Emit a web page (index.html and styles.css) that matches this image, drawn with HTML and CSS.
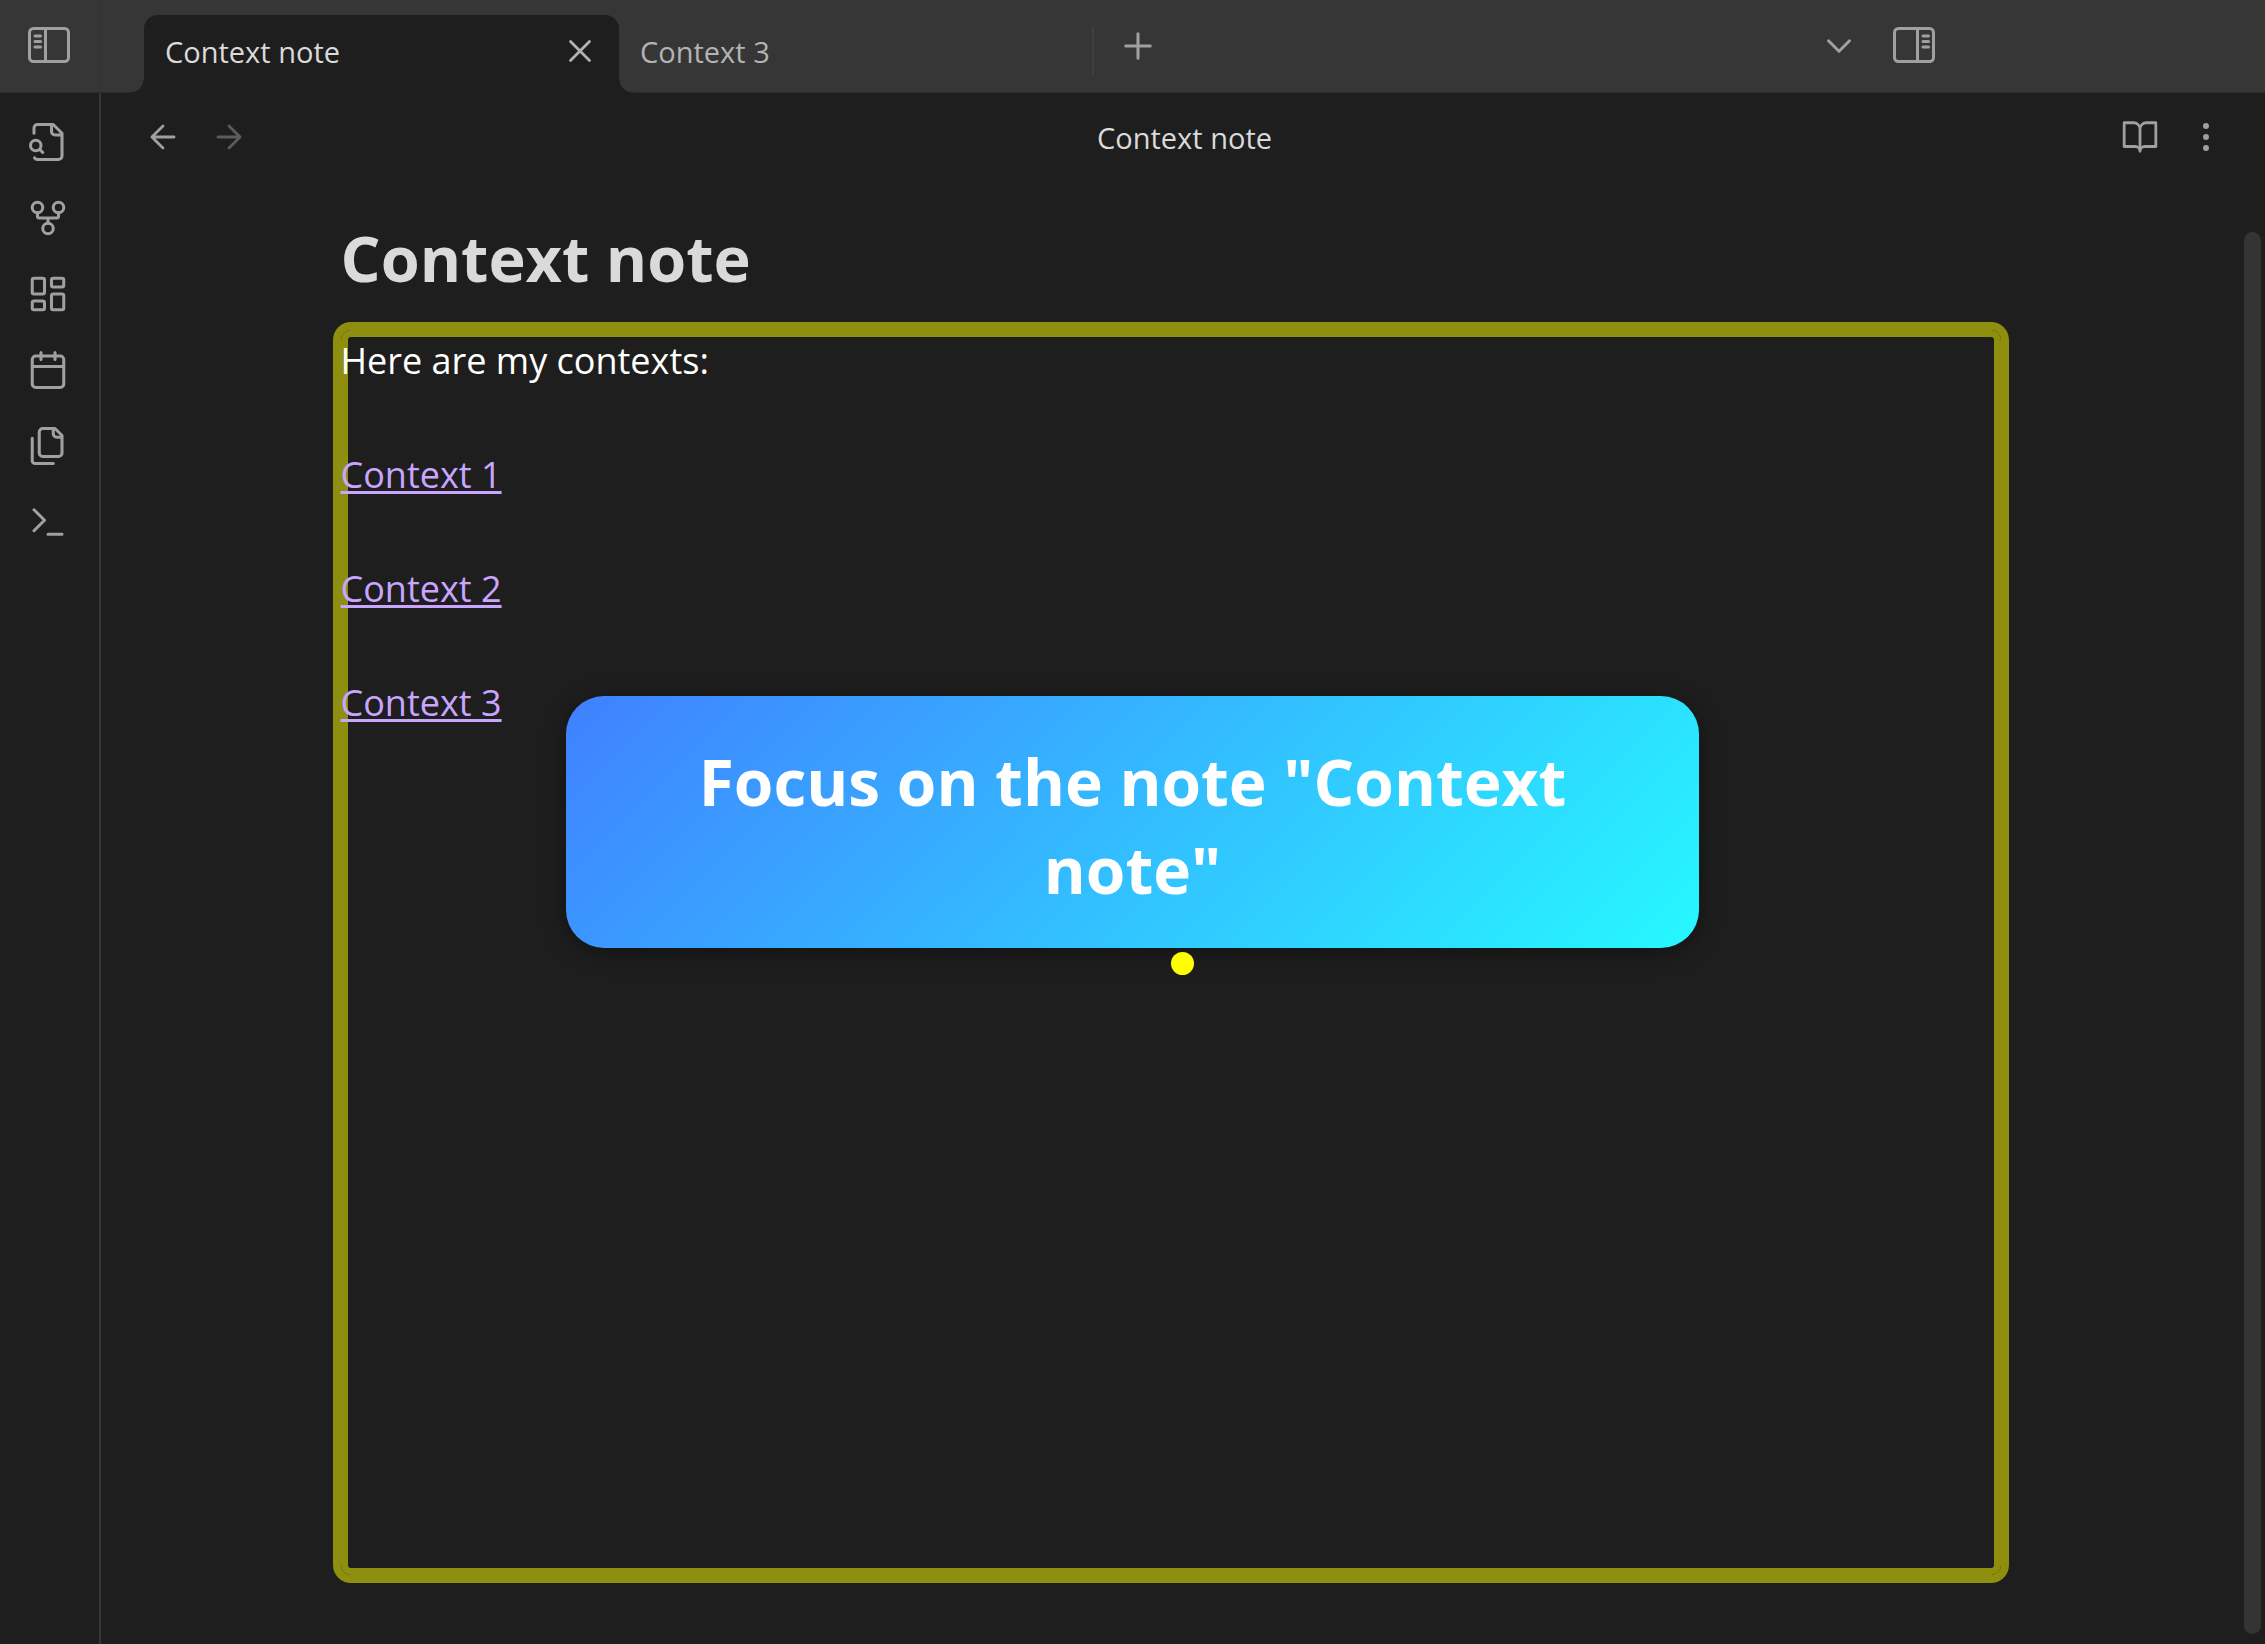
FILE: index.html
```html
<!DOCTYPE html>
<html lang="en">
<head>
<meta charset="utf-8">
<title>Context note</title>
<link rel="stylesheet" href="styles.css">
</head>
<body>
<div class="app">
  <header class="titlebar">
    <div class="titlebar-left">
      <button class="icon-button" aria-label="Toggle left sidebar">
        <svg class="icon-panel" viewBox="0 0 42 36"><rect x="1.5" y="1.5" width="39" height="33" rx="4"/><path d="M17.5 2v32M7 9h5.500M7 14.500h5.500M7 20h5.500"/></svg>
      </button>
    </div>
    <nav class="tabs" aria-label="Open notes">
      <div class="tab tab-active">
        <a class="tab-label" href="#note">Context note</a>
        <button class="icon-button" aria-label="Close tab"><svg class="icon icon-small" viewBox="0 0 24 24"><path d="M18 6 6 18M6 6l12 12"/></svg></button>
      </div>
      <div class="tab"><a class="tab-label" href="#context-3">Context 3</a></div>
    </nav>
    <button class="icon-button new-tab" aria-label="New tab"><svg class="icon" viewBox="0 0 24 24"><path d="M5 12h14M12 5v14"/></svg></button>
    <div class="titlebar-right">
      <button class="icon-button" aria-label="Tab list"><svg class="icon" viewBox="0 0 24 24"><path d="m6 9 6 6 6-6"/></svg></button>
      <button class="icon-button" aria-label="Toggle right sidebar">
        <svg class="icon-panel" viewBox="0 0 42 36"><rect x="1.5" y="1.5" width="39" height="33" rx="4"/><path d="M24.500 2v32M30 9h5.500M30 14.500h5.500M30 20h5.500"/></svg>
      </button>
    </div>
  </header>

  <div class="workspace">
    <aside class="ribbon">
      <button class="icon-button" aria-label="Quick switcher"><svg class="icon" viewBox="0 0 24 24"><path d="M4.268 21a2 2 0 0 0 1.727 1H18a2 2 0 0 0 2-2V7l-5-5H6a2 2 0 0 0-2 2v3M9 18l-1.500-1.500M14 2v4a2 2 0 0 0 2 2h4"/><circle cx="5" cy="14" r="3"/></svg></button>
      <button class="icon-button" aria-label="Graph view"><svg class="icon" viewBox="0 0 24 24"><circle cx="12" cy="18" r="3"/><circle cx="6" cy="6" r="3"/><circle cx="18" cy="6" r="3"/><path d="M18 9v2c0 .6-.4 1-1 1H7c-.6 0-1-.4-1-1V9M12 12v3"/></svg></button>
      <button class="icon-button" aria-label="Canvas"><svg class="icon" viewBox="0 0 24 24"><rect x="3" y="3" width="7" height="9" rx="1"/><rect x="14" y="3" width="7" height="5" rx="1"/><rect x="14" y="12" width="7" height="9" rx="1"/><rect x="3" y="16" width="7" height="5" rx="1"/></svg></button>
      <button class="icon-button" aria-label="Daily note"><svg class="icon" viewBox="0 0 24 24"><rect x="3" y="4" width="18" height="18" rx="2"/><path d="M16 2v4M8 2v4M3 10h18"/></svg></button>
      <button class="icon-button" aria-label="Templates"><svg class="icon" viewBox="0 0 24 24"><path d="M20 7h-3a2 2 0 0 1-2-2V2M9 18a2 2 0 0 1-2-2V4a2 2 0 0 1 2-2h7l4 4v10a2 2 0 0 1-2 2ZM3 7.600v12.800A1.600 1.600 0 0 0 4.600 22h10.400"/></svg></button>
      <button class="icon-button" aria-label="Command palette"><svg class="icon" viewBox="0 0 24 24"><path d="m4 17 6-6-6-6M12 19h8"/></svg></button>
    </aside>

    <main class="view">
      <div class="view-header">
        <div class="view-nav">
          <button class="icon-button" aria-label="Back"><svg class="icon icon-small" viewBox="0 0 24 24"><path d="m12 19-7-7 7-7M19 12H5"/></svg></button>
          <button class="icon-button" aria-label="Forward" disabled><svg class="icon icon-small" viewBox="0 0 24 24"><path d="M5 12h14M12 5l7 7-7 7"/></svg></button>
        </div>
        <div class="view-title">Context note</div>
        <div class="view-actions">
          <button class="icon-button" aria-label="Reading view"><svg class="icon icon-small" viewBox="0 0 24 24"><path d="M2 3h6a4 4 0 0 1 4 4v14a3 3 0 0 0-3-3H2zM22 3h-6a4 4 0 0 0-4 4v14a3 3 0 0 1 3-3h7z"/></svg></button>
          <button class="icon-button" aria-label="More options"><svg class="icon icon-small" viewBox="0 0 24 24"><circle cx="12" cy="12" r="1"/><circle cx="12" cy="5" r="1"/><circle cx="12" cy="19" r="1"/></svg></button>
        </div>
      </div>
      <div class="view-body">
        <article class="note" id="note">
          <h1 class="note-title">Context note</h1>
          <div class="note-content">
            <p>Here are my contexts:</p>
            <p><a href="#context-1">Context 1</a></p>
            <p><a href="#context-2">Context 2</a></p>
            <p><a href="#context-3">Context 3</a></p>
          </div>
        </article>
        <div class="scrollbar"></div>
      </div>
      <div class="pointer"></div>
    </main>
  </div>

  <div class="overlay">
    <div class="banner" role="status">Focus on the note "Context note"</div>
  </div>
</div>
</body>
</html>
```

FILE: styles.css
```css
* {
  box-sizing: border-box;
}

body {
  margin: 0;
  background: #1e1e1e;
  color: #dadada;
  font-family: "Open Sans", "Noto Sans", sans-serif;
  font-size: 29px;
}

.app {
  display: flex;
  flex-direction: column;
  min-height: 100vh;
}

.icon-button {
  display: flex;
  flex: none;
  padding: 0;
  border: 0;
  background: none;
  color: #a0a0a0;
}

.icon-button:disabled {
  color: #5c5c5c;
}

.icon,
.icon-panel {
  display: block;
  width: 42px;
  height: 42px;
  fill: none;
  stroke: currentColor;
  stroke-width: 1.75;
  stroke-linecap: round;
  stroke-linejoin: round;
}

.icon-small {
  width: 38px;
  height: 38px;
}

.icon-panel {
  height: 36px;
  stroke-width: 3;
}

/* Title bar and tabs */

.titlebar {
  display: flex;
  height: 93px;
  background: #363636;
  border-bottom: 1px solid #2a2a2a;
}

.titlebar-left {
  display: flex;
  width: 101px;
  padding: 27px 28px;
  border-right: 1px solid #333333;
}

.tabs {
  display: flex;
  padding: 15px 0 0 43px;
}

.tab {
  position: relative;
  display: flex;
  align-items: center;
  justify-content: space-between;
  width: 475px;
  height: 78px;
  padding: 0 20px 6px 21px;
}

.tab-label {
  color: #b3b3b3;
  text-decoration: none;
}

.tab-active {
  background: #1e1e1e;
  border-radius: 14px 14px 0 0;
}

.tab-active .tab-label {
  color: #dadada;
}

.tab-active .icon-button {
  color: #b3b3b3;
}

/* Flared feet where the active tab meets the page */
.tab-active::before,
.tab-active::after {
  content: "";
  position: absolute;
  bottom: 0;
  width: 14px;
  height: 14px;
}

.tab-active::before {
  right: 100%;
  background: radial-gradient(circle at 0 0, transparent 13px, #1e1e1e 14px);
}

.tab-active::after {
  left: 100%;
  background: radial-gradient(circle at 100% 0, transparent 13px, #1e1e1e 14px);
}

.tab:last-child::after {
  content: "";
  position: absolute;
  right: 0;
  top: 12px;
  width: 2px;
  height: 48px;
  background: #3f3f3f;
}

.new-tab {
  align-self: flex-start;
  margin: 25px 0 0 23px;
}

.titlebar-right {
  display: flex;
  align-items: flex-start;
  gap: 33px;
  margin-left: auto;
  padding: 25px 330px 0 0;
}

.titlebar-right .icon-panel {
  margin-top: 2px;
}

/* Ribbon */

.workspace {
  display: flex;
  flex: 1;
}

.ribbon {
  display: flex;
  flex-direction: column;
  gap: 34px;
  width: 101px;
  padding: 28px 27px;
  border-right: 2px solid #363636;
}

/* Note view */

.view {
  position: relative;
  display: flex;
  flex: 1;
  flex-direction: column;
}

.view-header {
  display: grid;
  grid-template-columns: 1fr auto 1fr;
  align-items: center;
  height: 89px;
  padding: 0 40px 0 43px;
}

.view-nav,
.view-actions {
  display: flex;
  gap: 28px;
  padding-bottom: 2px;
}

.view-actions {
  justify-content: flex-end;
}

.view-body {
  display: flex;
  flex: 1;
}

.note {
  display: flex;
  flex: 1;
  flex-direction: column;
  max-width: 1660px;
  margin: 0 auto;
  padding: 32px 0 69px;
}

.note-title {
  margin: 0 0 28px;
  font-size: 63px;
  line-height: 88px;
}

.note-content {
  flex: 1;
  padding-top: 2px;
  border-radius: 10px;
  box-shadow: 0 0 0 8px #8f8f0f, inset 0 0 0 7px #8f8f0f;
  color: #ffffff;
  font-size: 36px;
  line-height: 57px;
}

.note-content p {
  margin: 0 0 57px;
}

.note-content a {
  color: #c9a5ff;
  text-decoration-thickness: 3px;
  text-underline-offset: 3px;
  text-decoration-skip-ink: none;
}

.scrollbar {
  width: 17px;
  margin: 50px 4px 10px;
  border-radius: 9px;
  background: #343434;
}

.pointer {
  position: absolute;
  z-index: 1;
  top: 859px;
  left: 50%;
  width: 23px;
  height: 23px;
  margin-left: -12px;
  border-radius: 50%;
  background: #ffff00;
}

/* Announcement banner over the workspace */

.overlay {
  position: fixed;
  inset: 0;
  display: flex;
  align-items: center;
  justify-content: center;
  pointer-events: none;
}

.banner {
  width: 50%;
  padding: 42px 76px 34px;
  border-radius: 38px;
  background: linear-gradient(135deg, #4080ff, #26f8ff);
  box-shadow: 0 4px 24px rgba(0, 0, 0, 0.4);
  color: #ffffff;
  font-size: 64px;
  font-weight: 700;
  line-height: 88px;
  text-align: center;
}
```
